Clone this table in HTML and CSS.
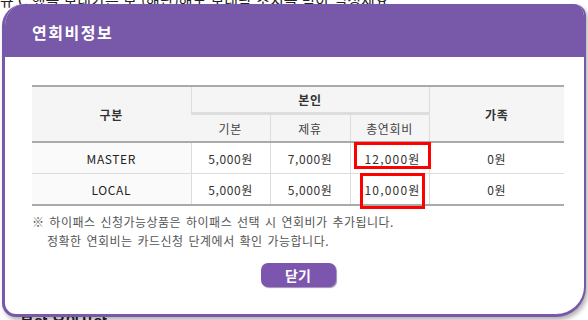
FILE: index.html
```html
<!DOCTYPE html>
<html lang="ko">
<head>
<meta charset="utf-8">
<link rel="stylesheet" href="styles.css">
</head>
<body>
<div class="page">
  <p class="bg-line top">규 C 했을 보내가는 보 (해단)해도 보내락 조치를 받아 일정세요</p>
  <p class="bg-line bottom">본항 유의사항</p>
</div>
<div class="popup">
  <div class="head"><h1 class="title">연회비정보</h1></div>
  <div class="content">
    <div class="table-wrap">
      <table class="fee">
        <colgroup>
          <col class="c1"><col class="c2"><col class="c3"><col class="c4"><col class="c5">
        </colgroup>
        <thead>
          <tr class="h1">
            <th rowspan="2" class="strong">구분</th>
            <th colspan="3" class="strong">본인</th>
            <th rowspan="2" class="strong last">가족</th>
          </tr>
          <tr class="h2">
            <th>기본</th>
            <th>제휴</th>
            <th>총연회비</th>
          </tr>
        </thead>
        <tbody>
          <tr class="r1">
            <td class="name">MASTER</td>
            <td>5,000원</td>
            <td>7,000원</td>
            <td class="total">12,000원</td>
            <td class="last">0원</td>
          </tr>
          <tr class="r2">
            <td class="name">LOCAL</td>
            <td>5,000원</td>
            <td>5,000원</td>
            <td class="total">10,000원</td>
            <td class="last">0원</td>
          </tr>
        </tbody>
      </table>
      <span class="mark mark1"></span>
      <span class="mark mark2"></span>
    </div>
    <div class="notes">
      <p class="note">※ 하이패스 신청가능상품은 하이패스 선택 시 연회비가 추가됩니다.</p>
      <p class="note indent">정확한 연회비는 카드신청 단계에서 확인 가능합니다.</p>
    </div>
    <div class="actions"><button class="close-btn" type="button">닫기</button></div>
  </div>
</div>
</body>
</html>
```

FILE: styles.css
```css
html, body {
  margin: 0;
  padding: 0;
  background: #fff;
}
body {
  width: 588px;
  height: 320px;
  overflow: hidden;
  position: relative;
  font-family: "Noto Sans CJK KR", "Noto Sans", sans-serif;
  color: #333;
}
.page {
  height: 320px;
  display: flex;
  flex-direction: column;
  justify-content: space-between;
}
.bg-line {
  margin: 0;
  font-size: 15px;
  line-height: 18px;
  color: #222;
  white-space: nowrap;
}
.bg-line.top {
  margin-top: -9px;
}
.bg-line.bottom {
  margin-bottom: -10px;
  padding-left: 20px;
  font-weight: bold;
}
.popup {
  position: absolute;
  left: 2px;
  top: 4px;
  width: 584px;
  height: 313px;
  box-sizing: border-box;
  background: #fff;
  border-left: 3px solid #7859a9;
  border-right: 2px solid #7859a9;
  border-bottom: 3px solid #7859a9;
  border-radius: 22px 12px 30px 14px;
  box-shadow: 2px 3px 4px rgba(0, 0, 0, 0.3);
  overflow: hidden;
  display: flex;
  flex-direction: column;
}
.head {
  height: 53px;
  background: #7859a9;
  padding: 17px 0 0 27px;
  box-sizing: border-box;
  margin-left: -3px;
  margin-right: -2px;
}
.title {
  margin: 0 0 0 3px;
  font-size: 16px;
  line-height: 22px;
  font-weight: bold;
  color: #fff;
  letter-spacing: 1.5px;
}
.content {
  padding: 28px 0 0 27px;
}
.table-wrap {
  position: relative;
  width: 532px;
}
.fee {
  width: 532px;
  border-collapse: collapse;
  table-layout: fixed;
  font-size: 12px;
}
.c1 { width: 159px; }
.c2 { width: 79px; }
.c3 { width: 80px; }
.c4 { width: 79px; }
.c5 { width: 135px; }
.fee th, .fee td {
  border-left: 1px solid #ddd;
  padding: 0;
  text-align: center;
  font-weight: normal;
  color: #333;
  letter-spacing: 0.6px;
}
.fee th:first-child, .fee td:first-child { border-left: 0; }
.fee thead { background: #f5f5f5; }
.fee .h1 th { border-top: 2px solid #aaa; height: 25px; }
.fee .h1 th[colspan] { border-bottom: 3px solid #ddd; }
.fee .h2 th { height: 26px; color: #444; font-size: 12px; }
.fee thead tr.h2 th, .fee thead th[rowspan] { border-bottom: 2px solid #aaa; }
.fee th.strong { font-weight: bold; font-size: 12px; color: #333; }
.fee td { height: 30px; }
.fee .r1 td { border-bottom: 1px solid #ddd; }
.fee .r2 td { border-bottom: 2px solid #aaa; }
.fee td.name { background: #fafafa; color: #222; }
.fee td.total { letter-spacing: 1.2px; padding-left: 6px; }
.mark {
  position: absolute;
  border: 3px solid #f00;
  box-sizing: border-box;
}
.mark1 { left: 322px; top: 57px; width: 77px; height: 27px; }
.mark2 { left: 328px; top: 88px; width: 65px; height: 36px; }
.notes {
  margin-top: 6px;
}
.note {
  margin: 0;
  font-size: 12px;
  line-height: 19px;
  color: #555;
  letter-spacing: 0.5px;
  word-spacing: 1px;
}
.note.indent { padding-left: 15px; }
.actions {
  display: flex;
  justify-content: center;
  margin-top: 13px;
  width: 532px;
}
.close-btn {
  width: 75px;
  height: 24px;
  margin: 0;
  border: 0;
  border-radius: 7px;
  background: #7c55ae;
  box-shadow: 1px 1px 1px rgba(60, 30, 100, 0.5);
  color: #fff;
  font-family: "Noto Sans CJK KR", sans-serif;
  font-size: 14px;
  font-weight: bold;
  line-height: 24px;
  padding: 0;
}
```
